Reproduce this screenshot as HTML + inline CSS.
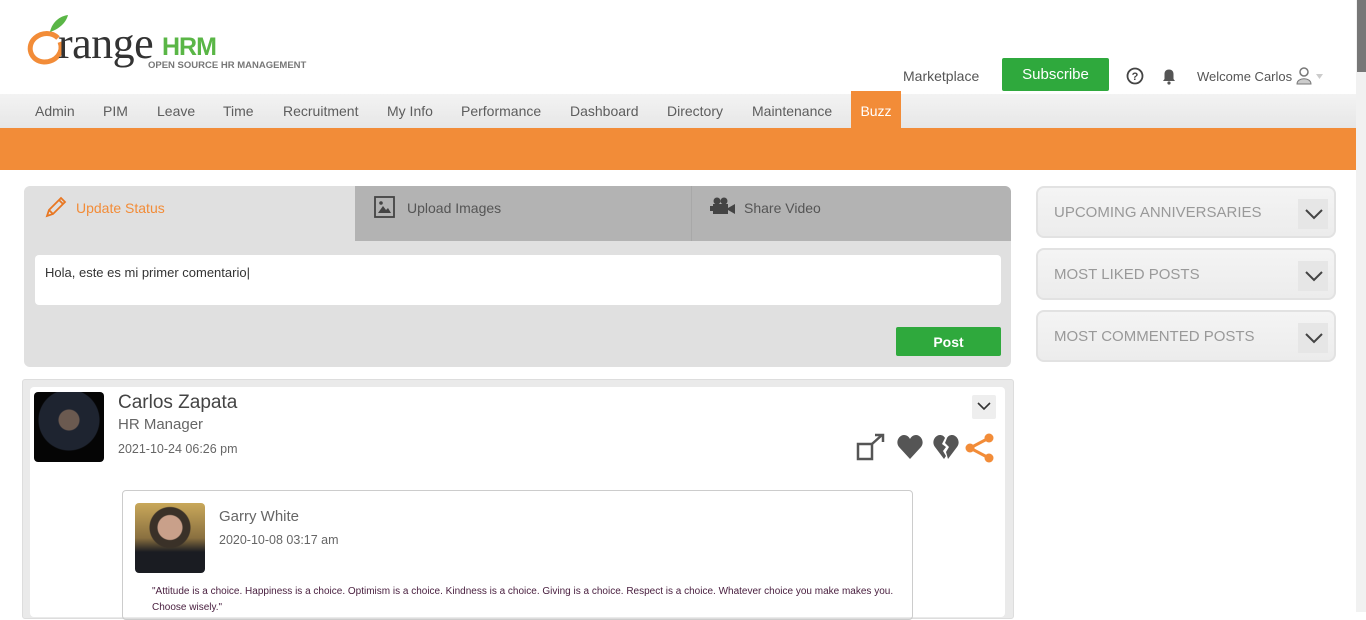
<!DOCTYPE html>
<html><head><meta charset="utf-8"><style>
*{box-sizing:border-box;margin:0;padding:0}
body{width:1366px;height:612px;overflow:hidden;background:#fff;font-family:"Liberation Sans",sans-serif;position:relative}
.a{position:absolute}
.nav span{position:absolute;top:9px;font-size:14px;color:#5d5d5d}
.side{position:absolute;left:1036px;width:300px;height:52px;background:linear-gradient(#f4f4f4,#ececec);border:2px solid #e2e2e2;border-radius:8px}
.side span{position:absolute;left:16px;top:16px;font-size:15px;color:#999}
.side i{position:absolute;right:6px;top:11px;width:30px;height:30px;background:#e6e6e6}
</style></head><body>
<!-- logo -->
<svg class="a" style="left:22px;top:12px" width="60" height="56" viewBox="0 0 60 56">
<path d="M36 26 C30 20 20 20 13 26 C4 34 8 49 22 50 C34 50 42 40 38 30" fill="none" stroke="#f28c38" stroke-width="5"/>
<path d="M28 20 C30 10 38 4 46 3 C44 11 37 17 28 20Z" fill="#5ab646"/>
</svg>
<div class="a" style="left:58px;top:18px;font-family:'Liberation Serif',serif;font-size:44px;color:#333;letter-spacing:-0.5px">range</div>
<div class="a" style="left:162px;top:33px;font-size:25px;color:#5ab646;font-weight:bold;letter-spacing:-1px">HRM</div>
<div class="a" style="left:148px;top:60px;font-size:9.5px;color:#777;font-weight:bold">OPEN SOURCE HR MANAGEMENT</div>
<div class="a" style="left:903px;top:68px;font-size:14px;color:#555">Marketplace</div>
<div class="a" style="left:1002px;top:58px;width:107px;height:33px;background:#2fa93d;border-radius:2px;color:#fff;font-size:15px;text-align:center;line-height:33px">Subscribe</div>
<svg class="a" style="left:1126px;top:67px" width="18" height="18" viewBox="0 0 18 18"><circle cx="9" cy="9" r="7.5" fill="none" stroke="#444" stroke-width="1.8"/><text x="9" y="13" font-size="11" font-weight="bold" text-anchor="middle" fill="#444" font-family="Liberation Sans">?</text></svg>
<svg class="a" style="left:1160px;top:67px" width="18" height="18" viewBox="0 0 18 18"><path d="M3 14 L15 14 L13.5 12 L13.5 7 C13.5 4 11.5 2.5 9 2.5 C6.5 2.5 4.5 4 4.5 7 L4.5 12Z" fill="#555"/><circle cx="9" cy="16" r="1.6" fill="#555"/></svg>
<div class="a" style="left:1197px;top:69px;font-size:13px;color:#555">Welcome Carlos</div>
<svg class="a" style="left:1296px;top:66px" width="28" height="20" viewBox="0 0 28 20"><circle cx="8" cy="6" r="4" fill="none" stroke="#777" stroke-width="1.5"/><path d="M1 18 C1 11 15 11 15 18Z" fill="#ccc" stroke="#777"/><path d="M20 8 L27 8 L23.5 13Z" fill="#ccc"/></svg>
<div class="a" style="left:1356px;top:0;width:10px;height:612px;background:#f1f1f1"></div>
<div class="a" style="left:1357px;top:0;width:9px;height:72px;background:#777"></div>
<!-- nav -->
<div class="a nav" style="left:0;top:94px;width:1356px;height:35px;background:linear-gradient(#f3f3f3,#e6e6e6)">
<span style="left:35px">Admin</span><span style="left:103px">PIM</span><span style="left:157px">Leave</span><span style="left:223px">Time</span><span style="left:283px">Recruitment</span><span style="left:387px">My Info</span><span style="left:461px">Performance</span><span style="left:570px">Dashboard</span><span style="left:667px">Directory</span><span style="left:752px">Maintenance</span>
</div>
<div class="a" style="left:851px;top:91px;width:50px;height:38px;background:#f28c38;color:#fff;font-size:14px;text-align:center;line-height:40px">Buzz</div>
<div class="a" style="left:0;top:128px;width:1356px;height:42px;background:#f28c38"></div>
<!-- status panel -->
<div class="a" style="left:24px;top:186px;width:987px;height:181px;background:#e0e0e0;border-radius:6px;overflow:hidden">
<div class="a" style="left:331px;top:0;width:656px;height:55px;background:#b3b3b3"></div>
<div class="a" style="left:667px;top:0;width:1px;height:55px;background:#a8a8a8"></div>
<svg class="a" style="left:20px;top:9px" width="24" height="24" viewBox="0 0 24 24"><path d="M3 21 L5 15 L17 3 L21 7 L9 19Z M5 15 L9 19 M15 5 L19 9" fill="none" stroke="#e87722" stroke-width="1.8"/></svg>
<div class="a" style="left:52px;top:14px;font-size:14px;color:#f28c38">Update Status</div>
<svg class="a" style="left:350px;top:9px" width="22" height="24" viewBox="0 0 22 24"><rect x="1" y="2" width="19" height="20" fill="none" stroke="#444" stroke-width="1.8"/><path d="M4 18 L9 11 L12 15 L14 13 L17 18Z" fill="#444"/><circle cx="7" cy="8" r="1.8" fill="#444"/></svg>
<div class="a" style="left:383px;top:14px;font-size:14px;color:#555">Upload Images</div>
<svg class="a" style="left:686px;top:11px" width="26" height="18" viewBox="0 0 26 18"><circle cx="7" cy="4" r="3.5" fill="#444"/><circle cx="14" cy="4" r="3.5" fill="#444"/><rect x="3" y="7" width="15" height="10" fill="#444"/><path d="M18 11 L25 7 L25 17 L18 13Z" fill="#444"/><rect x="0" y="9" width="3" height="5" fill="#444"/></svg>
<div class="a" style="left:720px;top:14px;font-size:14px;color:#555">Share Video</div>
<div class="a" style="left:11px;top:69px;width:966px;height:50px;background:#fff;border-radius:4px;font-size:13px;color:#333;padding:10px 10px">Hola, este es mi primer comentario|</div>
<div class="a" style="left:872px;top:141px;width:105px;height:29px;background:#2fa93d;border-radius:2px;color:#fff;font-size:14px;font-weight:bold;text-align:center;line-height:30px">Post</div>
</div>
<!-- post -->
<div class="a" style="left:22px;top:379px;width:992px;height:240px;background:#eaeaea;border:1px solid #ddd;border-radius:3px"></div>
<div class="a" style="left:30px;top:387px;width:975px;height:230px;background:#fff;border-radius:4px"></div>
<div class="a" style="left:34px;top:392px;width:70px;height:70px;background:radial-gradient(circle at 50% 40%,#6b5a50 0 10px,#1e2430 11px 30px,#050505 31px);border-radius:4px"></div>
<div class="a" style="left:118px;top:392px;font-size:19px;color:#444">Carlos Zapata</div>
<div class="a" style="left:118px;top:416px;font-size:15px;color:#666">HR Manager</div>
<div class="a" style="left:118px;top:442px;font-size:12.5px;color:#666">2021-10-24&nbsp;06:26 pm</div>
<div class="a" style="left:972px;top:395px;width:24px;height:24px;background:#eee;border-radius:2px"></div>
<svg class="a" style="left:976px;top:400px" width="16" height="12"><path d="M2 3 L8 9 L14 3" fill="none" stroke="#333" stroke-width="1.6"/></svg>
<svg class="a" style="left:855px;top:432px" width="30" height="30" viewBox="0 0 30 30"><path d="M3 12 H17 V27 H3Z" fill="none" stroke="#555" stroke-width="2.5"/><path d="M17 12 L27 3 M20 3 H28 V10" fill="none" stroke="#555" stroke-width="2.5"/></svg>
<svg class="a" style="left:896px;top:434px" width="28" height="26" viewBox="0 0 28 26"><path d="M14 25 L3 13 C-1 8 3 1 8 1 C11 1 13 3 14 5 C15 3 17 1 20 1 C25 1 29 8 25 13Z" fill="#555"/></svg>
<svg class="a" style="left:932px;top:434px" width="28" height="26" viewBox="0 0 28 26"><path d="M12 25 L3 13 C-1 8 3 1 8 1 C10 1 12 2 13 4 L10 10 L14 13 L11 17 L14 22Z M16 25 L25 13 C29 8 25 1 20 1 C18 1 16 2 15 4 L13 9 L17 13 L14 18Z" fill="#555"/></svg>
<svg class="a" style="left:965px;top:433px" width="30" height="30" viewBox="0 0 30 30"><circle cx="24" cy="5" r="4.5" fill="#f28c38"/><circle cx="5" cy="15" r="4.5" fill="#f28c38"/><circle cx="24" cy="25" r="4.5" fill="#f28c38"/><path d="M24 5 L5 15 L24 25" fill="none" stroke="#f28c38" stroke-width="3"/></svg>
<div class="a" style="left:122px;top:490px;width:791px;height:130px;border:1px solid #ccc;border-radius:4px"></div>
<div class="a" style="left:135px;top:503px;width:70px;height:70px;background:radial-gradient(circle at 50% 35%,#c9a08a 0 12px,#3a3128 13px 20px,transparent 21px),linear-gradient(#c9a85a,#8a7040 50%,#1a1c22 70%);border-radius:4px"></div>
<div class="a" style="left:219px;top:508px;font-size:15px;color:#666">Garry White</div>
<div class="a" style="left:219px;top:533px;font-size:12.5px;color:#666">2020-10-08&nbsp;03:17 am</div>
<div class="a" style="left:152px;top:584px;width:765px;font-size:10px;line-height:16px;color:#4a2040">"Attitude is a choice. Happiness is a choice. Optimism is a choice. Kindness is a choice. Giving is a choice. Respect is a choice. Whatever choice you make makes you. Choose wisely."</div>
<!-- side -->
<div class="side" style="top:186px"><span>UPCOMING ANNIVERSARIES</span><i></i></div>
<div class="side" style="top:248px"><span>MOST LIKED POSTS</span><i></i></div>
<div class="side" style="top:310px"><span>MOST COMMENTED POSTS</span><i></i></div>
<svg class="a" style="left:1304px;top:207px" width="20" height="14"><path d="M2 3 L10 11 L18 3" fill="none" stroke="#444" stroke-width="2"/></svg>
<svg class="a" style="left:1304px;top:269px" width="20" height="14"><path d="M2 3 L10 11 L18 3" fill="none" stroke="#444" stroke-width="2"/></svg>
<svg class="a" style="left:1304px;top:331px" width="20" height="14"><path d="M2 3 L10 11 L18 3" fill="none" stroke="#444" stroke-width="2"/></svg>
</body></html>
